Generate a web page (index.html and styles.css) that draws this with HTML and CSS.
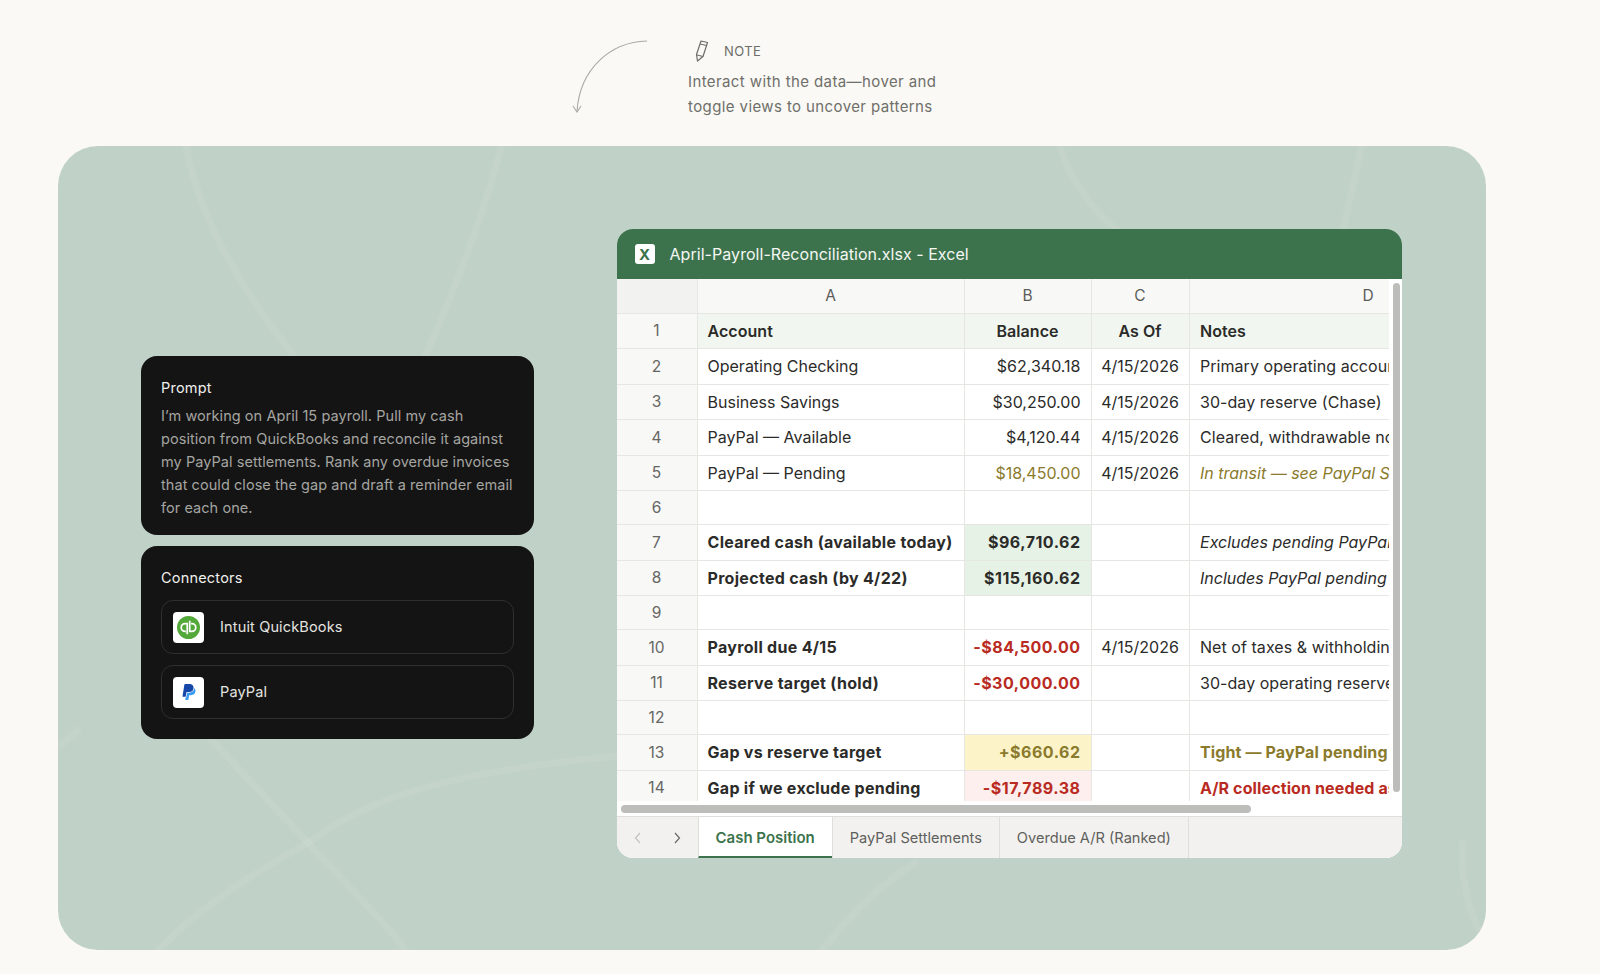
FILE: index.html
```html
<!DOCTYPE html>
<html lang="en">
<head>
<meta charset="utf-8">
<title>April Payroll Reconciliation</title>
<link rel="stylesheet" href="styles.css">
</head>
<body>
<header class="note-area">
  <svg class="note-arrow" viewBox="0 0 80 80" fill="none" stroke="#aaa9a3" stroke-width="1.1"><path d="M75 2C38 3 8 30 5 72"/><path d="M1 67l4 6 4-6"/></svg>
  <div class="note">
    <div class="note-head">
      <svg class="pencil" viewBox="0 0 16 22" fill="none" stroke="#6d6d69" stroke-width="1.2" stroke-linejoin="round"><path d="M8 1l6.500 1.500-4.500 14-5.500 4.500-1-6.500z"/><path d="M7.200 4l6.300 1.500M4 15l6 1.500"/></svg>
      <span class="note-label">NOTE</span>
    </div>
    <p class="note-text">Interact with the data—hover and<br>toggle views to uncover patterns</p>
  </div>
</header>

<main class="stage">
  <svg class="stage-lines" viewBox="0 0 1428 804" preserveAspectRatio="none" fill="none" stroke="#fff" stroke-opacity=".07" stroke-width="7">
    <path d="M127 -5C140 70 180 140 240 215"/>
    <path d="M445 -5C420 90 385 170 365 215"/>
    <path d="M150 590L250 697C300 750 330 780 352 810"/>
    <path d="M95 810C140 760 200 725 250 697C310 650 400 625 560 610"/>
    <path d="M1305 -5C1295 40 1290 60 1285 85"/>
    <path d="M0 602C8 595 14 590 22 582"/>
    <path d="M1000 -5C1010 30 1030 60 1060 85"/>
    <path d="M760 810C790 770 820 740 860 715"/>
    <path d="M1405 694C1402 730 1408 760 1424 790"/>
  </svg>

  <div class="side">
    <section class="panel prompt-panel">
      <h2 class="panel-title">Prompt</h2>
      <p class="prompt">I’m working on April 15 payroll. Pull my cash position from QuickBooks and reconcile it against my PayPal settlements. Rank any overdue invoices that could close the gap and draft a reminder email for each one.</p>
    </section>
    <section class="panel">
      <h2 class="panel-title connectors-title">Connectors</h2>
      <div class="connector">
        <span class="logo">
          <svg viewBox="0 0 24 24" width="23" height="23"><circle cx="12" cy="12" r="12" fill="#53a83a"/><g fill="none" stroke="#fff" stroke-width="1.800"><path d="M10.700 19V7.900H8.500a4.100 4.100 0 0 0 0 8.200h.8"/><path d="M13.300 5v11.100h2.200a4.100 4.100 0 0 0 0-8.200h-.8"/></g></svg>
        </span>
        <span class="connector-name">Intuit QuickBooks</span>
      </div>
      <div class="connector">
        <span class="logo">
          <svg viewBox="0 0 24 24" width="16" height="16"><path fill="#1546a8" d="M7.016 19.198h-4.200a.562.562 0 0 1-.555-.65L5.093.584A.692.692 0 0 1 5.776 0h7.222c3.417 0 5.904 2.488 5.846 5.500-.006.25-.027.5-.066.747A6.794 6.794 0 0 1 12.071 12H8.743a.69.69 0 0 0-.682.583l-.325 2.056-.013.083-.692 4.390-.015.087z"/><path fill="#3b9bf0" d="M19.790 6.142c-.01.087-.01.175-.023.261a7.760 7.760 0 0 1-7.695 6.598H9.007l-.283 1.795-.013.083-.692 4.390-.134.843-.014.088H6.860l-.497 3.150a.562.562 0 0 0 .555.65h3.612c.34 0 .63-.249.683-.585l.952-6.031a.692.692 0 0 1 .683-.584h2.126a6.793 6.793 0 0 0 6.707-5.752c.306-1.950-.466-3.744-1.894-4.906z"/></svg>
        </span>
        <span class="connector-name">PayPal</span>
      </div>
    </section>
  </div>

  <section class="window">
    <div class="titlebar">
      <span class="xl-icon">X</span>
      <span class="xl-title">April-Payroll-Reconciliation.xlsx - Excel</span>
    </div>
    <div class="sheet">
      <div class="viewport">
        <div class="row head-row"><div class="rh corner"></div><div class="c ch">A</div><div class="c ch">B</div><div class="c ch">C</div><div class="c ch">D</div></div>
        <div class="row title-row"><div class="rh">1</div><div class="c th">Account</div><div class="c th ctr">Balance</div><div class="c th ctr">As Of</div><div class="c th note-cell">Notes</div></div>
        <div class="row"><div class="rh">2</div><div class="c">Operating Checking</div><div class="c r">$62,340.18</div><div class="c ctr">4/15/2026</div><div class="c note-cell">Primary operating account</div></div>
        <div class="row"><div class="rh">3</div><div class="c">Business Savings</div><div class="c r">$30,250.00</div><div class="c ctr">4/15/2026</div><div class="c note-cell">30-day reserve (Chase)</div></div>
        <div class="row"><div class="rh">4</div><div class="c">PayPal — Available</div><div class="c r">$4,120.44</div><div class="c ctr">4/15/2026</div><div class="c note-cell">Cleared, withdrawable now</div></div>
        <div class="row"><div class="rh">5</div><div class="c">PayPal — Pending</div><div class="c r amber">$18,450.00</div><div class="c ctr">4/15/2026</div><div class="c note-cell i amber">In transit — see PayPal Settlements</div></div>
        <div class="row empty"><div class="rh">6</div><div class="c"></div><div class="c"></div><div class="c"></div><div class="c"></div></div>
        <div class="row"><div class="rh">7</div><div class="c b">Cleared cash (available today)</div><div class="c r b num bg-green">$96,710.62</div><div class="c"></div><div class="c note-cell i">Excludes pending PayPal</div></div>
        <div class="row"><div class="rh">8</div><div class="c b">Projected cash (by 4/22)</div><div class="c r b num bg-green">$115,160.62</div><div class="c"></div><div class="c note-cell i">Includes PayPal pending</div></div>
        <div class="row empty"><div class="rh">9</div><div class="c"></div><div class="c"></div><div class="c"></div><div class="c"></div></div>
        <div class="row"><div class="rh">10</div><div class="c b">Payroll due 4/15</div><div class="c r b num red">-$84,500.00</div><div class="c ctr">4/15/2026</div><div class="c note-cell">Net of taxes &amp; withholdings</div></div>
        <div class="row"><div class="rh">11</div><div class="c b">Reserve target (hold)</div><div class="c r b num red">-$30,000.00</div><div class="c"></div><div class="c note-cell">30-day operating reserve</div></div>
        <div class="row empty"><div class="rh">12</div><div class="c"></div><div class="c"></div><div class="c"></div><div class="c"></div></div>
        <div class="row"><div class="rh">13</div><div class="c b">Gap vs reserve target</div><div class="c r b num amber bg-yellow">+$660.62</div><div class="c"></div><div class="c b note-cell amber">Tight — PayPal pending must clear</div></div>
        <div class="row"><div class="rh">14</div><div class="c b">Gap if we exclude pending</div><div class="c r b num red bg-red">-$17,789.38</div><div class="c"></div><div class="c b note-cell red">A/R collection needed as buffer</div></div>
      </div>
      <div class="hscroll-track"></div>
      <div class="vthumb"></div>
      <div class="hthumb"></div>
    </div>
    <nav class="tabs">
      <div class="tab-nav">
        <svg class="chev faded" viewBox="0 0 8 12" fill="none" stroke="currentColor" stroke-width="1.200"><path d="M6 1L1.500 6 6 11"/></svg>
        <svg class="chev" viewBox="0 0 8 12" fill="none" stroke="currentColor" stroke-width="1.200"><path d="M2 1l4.500 5L2 11"/></svg>
      </div>
      <div class="tab active">Cash Position</div>
      <div class="tab">PayPal Settlements</div>
      <div class="tab">Overdue A/R (Ranked)</div>
    </nav>
  </section>
</main>
</body>
</html>
```

FILE: styles.css
```css
* { box-sizing: border-box; }
html, body { margin: 0; padding: 0; }
body {
  width: 1600px;
  height: 974px;
  overflow: hidden;
  background: #faf9f5;
  font-family: Inter, "Noto Sans", sans-serif;
  color: #262624;
}
.note-area {
  height: 146px;
  display: flex;
  padding: 39px 0 0 572px;
}
.note-arrow { width: 80px; height: 80px; flex: none; }
.note { margin-left: 36px; }
.note-head {
  display: flex;
  align-items: center;
  height: 24px;
  padding-left: 5px;
}
.pencil { width: 16px; height: 22px; }
.note-label {
  margin-left: 15px;
  font-size: 13px;
  letter-spacing: .4px;
  color: #6d6d69;
}
.note-text {
  margin: 7px 0 0;
  font-size: 15px;
  line-height: 24.500px;
  letter-spacing: .4px;
  color: #6f6f6a;
}
.stage {
  position: relative;
  width: 1428px;
  height: 804px;
  margin-left: 58px;
  padding: 83px 0 0 83px;
  display: flex;
  align-items: flex-start;
  gap: 82.500px;
  background: #c0d1c7;
  border-radius: 40px;
  overflow: hidden;
}
.stage-lines { position: absolute; inset: 0; width: 100%; height: 100%; }
.side {
  position: relative;
  width: 393px;
  margin-top: 127px;
  display: flex;
  flex-direction: column;
  gap: 11px;
}
.panel {
  background: #141414;
  border-radius: 16px;
  padding: 20px;
}
.prompt-panel { padding-bottom: 16px; }
.panel-title {
  margin: 0;
  font-size: 14.500px;
  line-height: 23px;
  font-weight: 400;
  letter-spacing: .2px;
  color: #f0f0ec;
}
.connectors-title { margin-bottom: 11px; }
.prompt {
  margin: 5px 0 0;
  font-size: 14.500px;
  line-height: 23.100px;
  letter-spacing: .06px;
  color: #a5a5a1;
}
.connector {
  display: flex;
  align-items: center;
  height: 54px;
  padding-left: 11px;
  border: 1px solid #2f2f2d;
  border-radius: 12px;
  margin-bottom: 11px;
}
.connector:last-child { margin-bottom: 0; }
.logo {
  width: 31px;
  height: 31px;
  flex: none;
  display: flex;
  align-items: center;
  justify-content: center;
  background: #fff;
  border-radius: 4px;
}
.connector-name {
  margin: 0 0 2px 16px;
  font-size: 14.500px;
  letter-spacing: .15px;
  color: #e4e4e0;
}
.window {
  position: relative;
  width: 785.500px;
  height: 629px;
  display: flex;
  flex-direction: column;
  border-radius: 16px;
  overflow: hidden;
  background: #fff;
}
.titlebar {
  height: 50px;
  flex: none;
  display: flex;
  align-items: center;
  padding-left: 18px;
  background: #3c734c;
}
.xl-icon {
  width: 20px;
  height: 20px;
  display: flex;
  align-items: center;
  justify-content: center;
  background: #fff;
  border-radius: 3px;
  font-size: 15px;
  font-weight: 700;
  color: #3c734c;
}
.xl-title {
  margin-left: 15px;
  font-size: 16px;
  letter-spacing: .05px;
  color: #f4f7f4;
}
.sheet {
  position: relative;
  flex: 1;
  min-height: 0;
}
.viewport {
  width: 772.500px;
  height: 522px;
  overflow: hidden;
}
.row {
  display: grid;
  grid-template-columns: 81px 267px 127px 98px 358px;
  width: 931px;
  height: 35.500px;
}
.head-row { height: 34.500px; }
.row.empty { height: 34px; }
.rh, .c {
  display: flex;
  align-items: center;
  border-right: 1px solid #e6e6e3;
  border-bottom: 1px solid #e6e6e3;
  font-size: 16px;
  white-space: nowrap;
  overflow: hidden;
}
.rh {
  justify-content: center;
  background: #f8f8f7;
  color: #666663;
  font-size: 15.500px;
}
.corner { background: #f2f2f0; }
.c { padding: 0 10px; color: #2b2b29; }
.ch {
  justify-content: center;
  background: #f8f8f7;
  color: #5c5c59;
  font-size: 15.500px;
}
.title-row .c { background: #f1f6f0; }
.th { font-weight: 600; letter-spacing: .05px; }
.ctr { justify-content: center; }
.r { justify-content: flex-end; }
.b { font-weight: 700; letter-spacing: .3px; }
.num { letter-spacing: .5px; }
.c.note-cell { padding-left: 10.500px; letter-spacing: .05px; }
.c.note-cell.b { letter-spacing: .12px; }
.c.note-cell.i { letter-spacing: 0; }
.i { font-style: italic; }
.c.amber { color: #8a7a2c; }
.c.red { color: #b92a22; }
.bg-green { background: #e6f2e6; }
.bg-yellow { background: #fdf3c9; }
.bg-red { background: #fcefed; }
.hscroll-track { height: 15px; background: #fff; }
.vthumb {
  position: absolute;
  top: 4px;
  right: 2px;
  width: 7px;
  height: 509px;
  border-radius: 4px;
  background: #bdbdbc;
}
.hthumb {
  position: absolute;
  left: 4px;
  top: 526px;
  width: 630px;
  height: 8px;
  border-radius: 4px;
  background: #bdbdbc;
}
.tabs {
  height: 42px;
  flex: none;
  display: flex;
  background: #f2f1ef;
  border-top: 1px solid #dededb;
}
.tab-nav {
  width: 81px;
  display: flex;
  align-items: center;
  justify-content: space-between;
  padding: 0 17px;
  color: #6a6a67;
}
.chev { width: 8px; height: 12px; }
.faded { color: #c2c2bf; }
.tab {
  display: flex;
  align-items: center;
  justify-content: center;
  font-size: 14.600px;
  color: #5f5f5c;
  border-left: 1px solid #dededb;
  padding: 1px 17px 0;
}
.tab:last-child { border-right: 1px solid #dededb; }
.tab.active {
  background: #fff;
  color: #3c734c;
  font-size: 15px;
  font-weight: 600;
  padding-top: 2px;
  border-bottom: 2px solid #3c734c;
}
```
